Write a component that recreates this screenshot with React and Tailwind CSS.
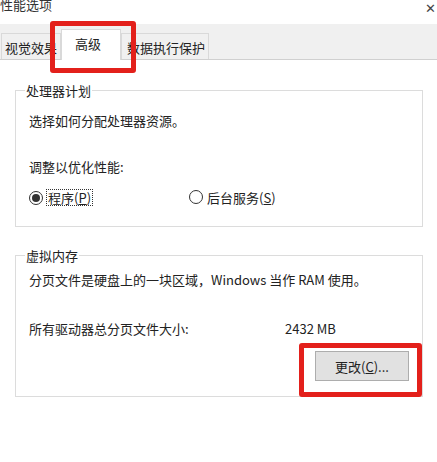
import React from "react";

const font = { fontFamily: '"Noto Sans CJK SC", "Noto Sans", sans-serif' };

function Radio({ checked }) {
  return (
    <span className="inline-flex h-[14px] w-[14px] items-center justify-center rounded-full border border-[#333] bg-white">
      {checked && <span className="h-[8px] w-[8px] rounded-full bg-[#333]" />}
    </span>
  );
}

export default function App() {
  return (
    <div
      className="relative h-[462px] w-[437px] overflow-hidden bg-white text-[13px] leading-none text-[#222]"
      style={font}
    >
      {/* title */}
      <div className="flex h-[24px] items-start justify-between">
        <span className="-mt-[3px] text-[13px] leading-[16px] text-[#333]">性能选项</span>
        <span className="mr-[1px] mt-[1px] text-[13px] leading-[14px] text-[#444]">✕</span>
      </div>
      {/* tabs */}
      <div className="flex h-[36px] items-end border-b border-[#d0d0d0] bg-[#f0f0f0] pl-[1px]">
        <div className="flex h-[26px] items-center border border-b-0 border-[#d9d9d9] px-[3px] pt-[1px] text-[13px]">视觉效果</div>
        <div className="-mb-[1px] flex h-[31px] w-[60px] items-center border border-b-0 border-[#d9d9d9] bg-white pb-[4px] pl-[13px] text-[13px]">
          高级
        </div>
        <div className="flex h-[26px] items-center border border-b-0 border-[#d9d9d9] pl-[5px] pr-[3px] pt-[1px] text-[13px]">数据执行保护</div>
      </div>

      {/* content */}
      <div className="flex flex-col gap-[28px] pl-[15px] pr-[14px] pt-[30px]">
        <div className="relative h-[137px] border border-[#dcdcdc] pl-[13px]">
          <span className="absolute -top-[8px] left-[9px] bg-white px-[1px] text-[13px] leading-[15px]">处理器计划</span>
          <div className="pt-[23px]">选择如何分配处理器资源。</div>
          <div className="pt-[33px]">调整以优化性能:</div>
          <div className="flex items-center pt-[16px]">
            <Radio checked />
            <span className="ml-[3px] border border-dotted border-[#333] px-[1px] py-[1px]">程序(<span className="underline">P</span>)</span>
            <span className="ml-[96px]"><Radio /></span>
            <span className="ml-[4px]">后台服务(<span className="underline">S</span>)</span>
          </div>
        </div>

        <div className="relative h-[142px] border border-[#dcdcdc] pl-[13px]">
          <span className="absolute -top-[8px] left-[9px] bg-white px-[1px] text-[13px] leading-[15px]">虚拟内存</span>
          <div className="pt-[17px]">分页文件是硬盘上的一块区域，Windows 当作 RAM 使用。</div>
          <div className="flex pt-[36px]">
            <span className="w-[256px]">所有驱动器总分页文件大小:</span>
            <span>2432 MB</span>
          </div>
          <div className="flex justify-end pr-[13px] pt-[16px]">
            <div className="flex h-[30px] w-[94px] items-center justify-center border border-[#adadad] bg-[#e1e1e1]">
              更改(<span className="underline">C</span>)...
            </div>
          </div>
        </div>
      </div>

      {/* highlight boxes */}
      <div className="absolute left-[50px] top-[21px] h-[52px] w-[86px] rounded-[3px] border-[5px] border-[#e3201b]" />
      <div className="absolute left-[299px] top-[343px] h-[54px] w-[123px] rounded-[3px] border-[5px] border-[#e3201b]" />
    </div>
  );
}
